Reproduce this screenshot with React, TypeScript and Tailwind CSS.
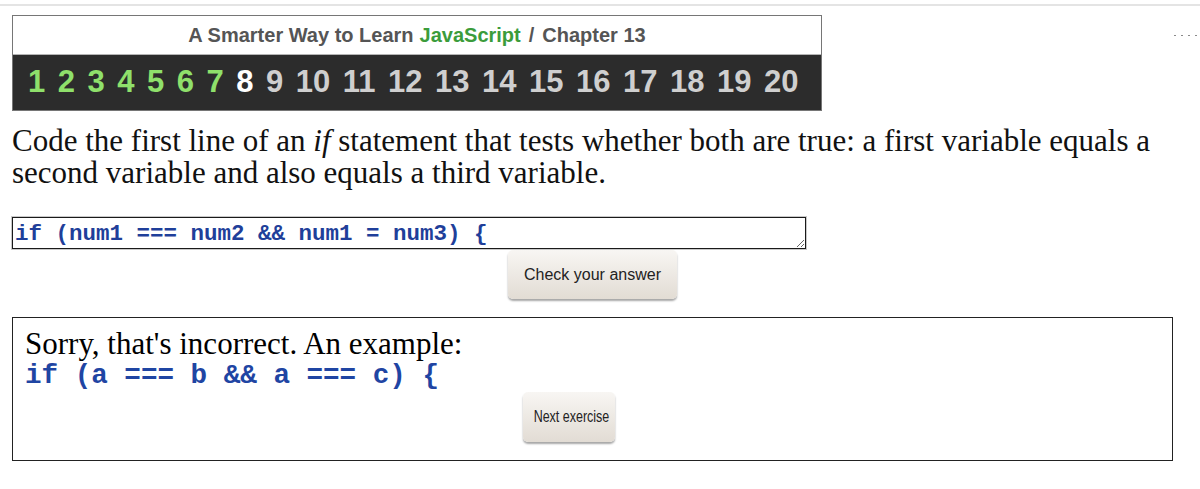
const numbers = Array.from({ length: 20 }, (_, i) => i + 1);

function numberColor(n: number) {
  if (n <= 7) return "text-[#8fe06b]";
  if (n === 8) return "text-white";
  return "text-[#cfcfcf]";
}

export default function App() {
  return (
    <div className="w-[1200px] h-[489px] bg-white overflow-hidden">
      <div className="h-[4px]" />
      <div className="h-[2px] bg-[#e4e4e4]" />

      <div className="flex items-start pl-[12px] pt-[9px]">
        {/* chapter header */}
        <div className="w-[810px] border border-[#767676] font-['Liberation_Sans',Arial,sans-serif]">
          <div className="h-[39px] flex items-center justify-center border-b border-[#b5b5b5] text-[20px] font-bold text-[#555]">
            <span>A Smarter Way to Learn</span>
            <span className="ml-[6px] text-[#3b9c3b]">JavaScript</span>
            <span className="ml-[8px]">/</span>
            <span className="ml-[8px]">Chapter 13</span>
          </div>
          <div className="h-[55px] bg-[#2c2c2c] flex items-center gap-[12.5px] pl-[15px] text-[31px] font-bold">
            {numbers.map((n) => (
              <span key={n} className={numberColor(n)}>
                {n}
              </span>
            ))}
          </div>
        </div>
        <div className="ml-auto mr-[3px] mt-[20px] flex gap-[5px]">
          <span className="w-[2px] h-[1px] bg-[#8a8a8a]" />
          <span className="w-[2px] h-[1px] bg-[#8a8a8a]" />
          <span className="w-[2px] h-[1px] bg-[#8a8a8a]" />
          <span className="w-[2px] h-[1px] bg-[#8a8a8a]" />
        </div>
      </div>

      <div className="px-[12px]">
        <p className="mt-[14px] w-[1161px] text-[31px] leading-[32px] text-[#111] font-['Liberation_Serif',Georgia,serif]">
          Code the first line of an <i>if</i> statement that tests whether both are true: a first variable equals a
          <br />
          second variable and also equals a third variable.
        </p>

        <textarea
          readOnly
          defaultValue="if (num1 === num2 && num1 = num3) {"
          className="block mt-[28px] w-[794px] h-[32px] border border-[#1a1a1a] shadow-[0_0_0_1px_#c9c9c9] pl-[2px] pt-[1px] leading-[30px] text-[22.5px] font-bold text-[#1f3f9a] font-['Liberation_Mono','Courier_New',monospace] resize-y overflow-hidden outline-none"
        />

        <button className="block mt-[1px] ml-[496px] w-[169px] h-[49px] rounded-[5px] bg-gradient-to-b from-[#f8f6f3] to-[#e2dcd4] shadow-[0_2px_2px_rgba(0,0,0,0.35)] text-[16px] text-[#222] font-['Liberation_Sans',Arial,sans-serif]">
          Check your answer
        </button>

        <div className="mt-[18px] w-[1161px] h-[144px] border border-[#222] pl-[12px] pt-[10px]">
          <p className="text-[31px] leading-[31px] text-black font-['Liberation_Serif',Georgia,serif]">
            Sorry, that's incorrect. An example:
          </p>
          <p className="mt-[2px] text-[27.6px] leading-[30px] font-bold text-[#1f45a3] font-['Liberation_Mono','Courier_New',monospace] whitespace-pre">
            if (a === b &amp;&amp; a === c) {"{"}
          </p>
          <button className="block mt-[1px] ml-[498px] w-[92px] h-[50px] rounded-[5px] bg-gradient-to-b from-[#f8f6f3] to-[#e2dcd4] shadow-[0_2px_2px_rgba(0,0,0,0.35)] text-[16px] text-[#222] font-['Liberation_Sans',Arial,sans-serif]">
            <span className="inline-block scale-x-[0.78] whitespace-nowrap">Next exercise</span>
          </button>
        </div>
      </div>
    </div>
  );
}
